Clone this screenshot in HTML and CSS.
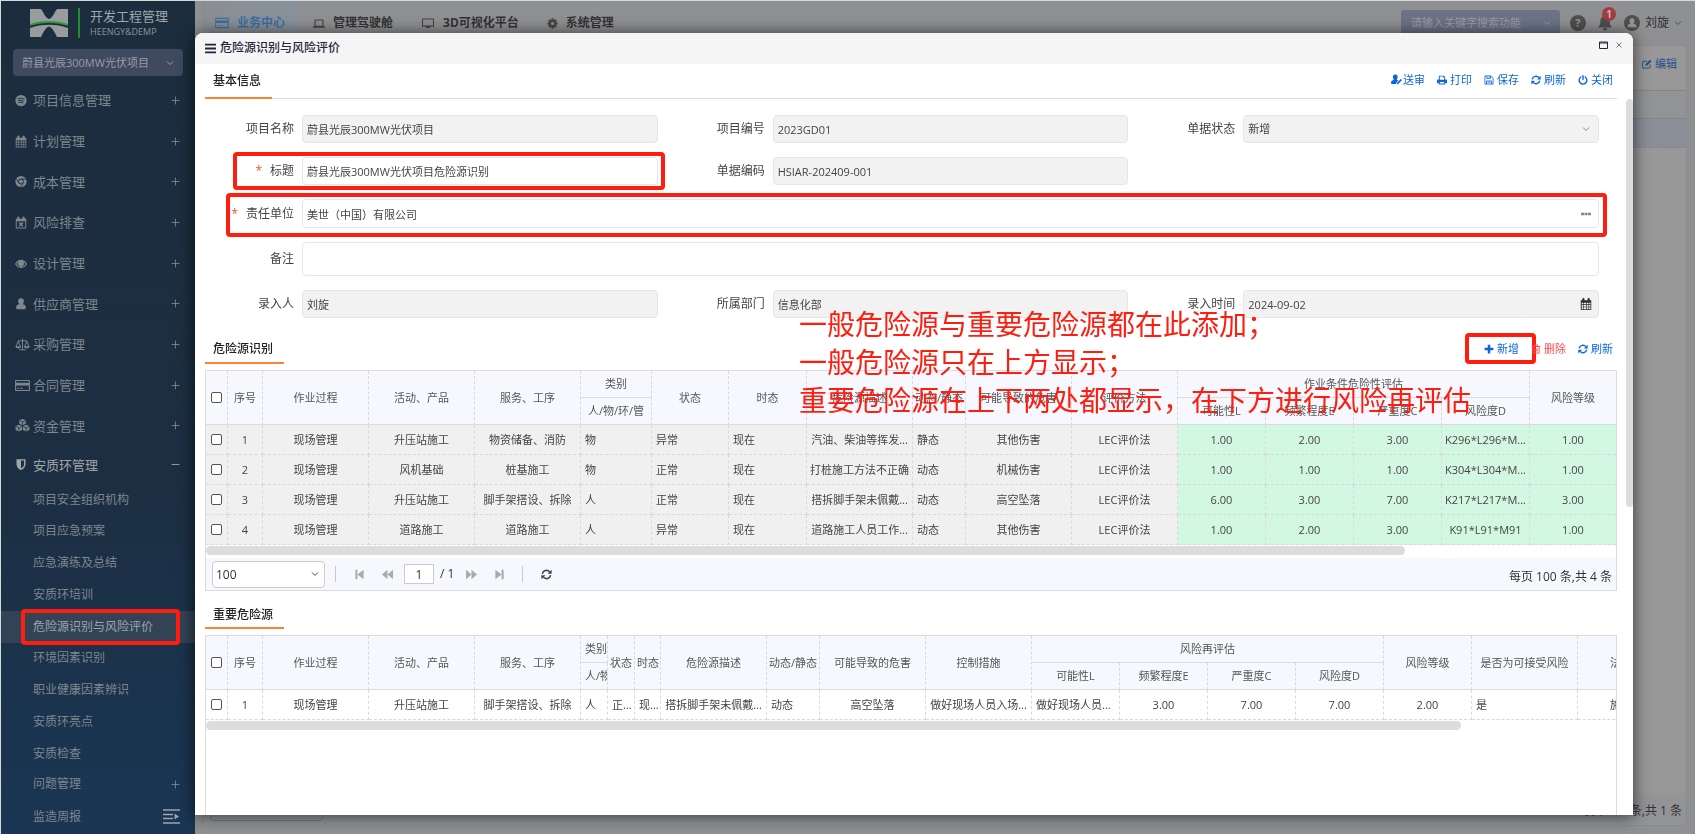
FILE: index.html
```html
<!DOCTYPE html>
<html lang="zh-CN">
<head>
<meta charset="utf-8">
<meta name="viewport" content="width=device-width, initial-scale=1">
<title>开发工程管理</title>
<link rel="stylesheet" href="styles.css">
</head>
<body>
<svg class="sprite" aria-hidden="true">
  <symbol id="plus-thin" viewBox="0 0 16 16"><path d="M8 1v14M1 8h14" fill="none" stroke="currentColor" stroke-width="1.6"/></symbol>
  <symbol id="minus-thin" viewBox="0 0 16 16"><path d="M1 8h14" fill="none" stroke="currentColor" stroke-width="1.6"/></symbol>
  <symbol id="chevron" viewBox="0 0 16 16"><path d="M2 5l6 6 6-6" fill="none" stroke="currentColor" stroke-width="2"/></symbol>
  <symbol id="spotify" viewBox="0 0 16 16"><circle cx="8" cy="8" r="7.5" fill="currentColor"/><path d="M3.5 5.6c3-.9 6.500-.6 9.200.9M4 8.300c2.600-.7 5.500-.4 7.800.8M4.500 10.800c2.200-.6 4.500-.3 6.300.7" fill="none" stroke="#1c2e41" stroke-width="1.300"/></symbol>
  <symbol id="calendar" viewBox="0 0 16 16"><path fill="currentColor" fill-rule="evenodd" d="M1 3h2V1.500a1 1 0 0 1 3 0V3h4V1.500a1 1 0 0 1 3 0V3h2v13H1zm1.200 3.300v2h2.300v-2zm3.200 0v2H8v-2zm3.500 0v2h2.400v-2zm3.300 0v2H14v-2zM2.200 9.200v2.300h2.300V9.200zm3.200 0v2.300H8V9.200zm3.500 0v2.300h2.400V9.200zm3.300 0v2.300H14V9.200zm-10 3.200V15h2.300v-2.600zm3.200 0V15H8v-2.600zm3.500 0V15h2.400v-2.600zm3.300 0V15H14v-2.600z"/></symbol>
  <symbol id="chrome" viewBox="0 0 16 16"><circle cx="8" cy="8" r="7.500" fill="currentColor"/><circle cx="8" cy="8" r="3.300" fill="none" stroke="#1c2e41" stroke-width="1.200"/><path d="M8 4.700h7M5.100 9.600L1.800 4M10.900 9.600L7.500 15.500" stroke="#1c2e41" stroke-width="1.100"/></symbol>
  <symbol id="calendar-x" viewBox="0 0 16 16"><path fill="currentColor" fill-rule="evenodd" d="M1 3h2V1.500a1 1 0 0 1 3 0V3h4V1.500a1 1 0 0 1 3 0V3h2v13H1zm1.300 3.300v8.400h11.400V6.300z"/><path d="M5.500 8l5 5m0-5l-5 5" stroke="currentColor" stroke-width="1.800"/></symbol>
  <symbol id="eye" viewBox="0 0 16 16"><path fill="currentColor" fill-rule="evenodd" d="M0 8.500C2 5 5 3 8 3s6 2 8 5.500C14 12 11 14 8 14S2 12 0 8.500zm2 0c1.500 2.500 3.700 3.800 6 3.800s4.500-1.300 6-3.800c-.8-1.400-1.800-2.400-3-3.100a4 4 0 1 1-6 0c-1.200.7-2.200 1.700-3 3.100z"/></symbol>
  <symbol id="user" viewBox="0 0 16 16"><path fill="currentColor" d="M8 1a3.800 3.800 0 0 1 3.800 4c0 1.800-.8 3.300-1.800 4 3 .3 4.500 1.500 4.500 4.500 0 1-.7 2-2 2h-9c-1.300 0-2-1-2-2C1.500 10.500 3 9.300 6 9 5 8.300 4.200 6.800 4.200 5A3.800 3.800 0 0 1 8 1z"/></symbol>
  <symbol id="scale" viewBox="0 0 18 16"><path fill="none" stroke="currentColor" stroke-width="1.200" d="M9 1v13.500M5 14.500h8M3.500 3.500h11M3.700 4L.8 11h6zM14.300 4l-3 7h6z"/><path fill="currentColor" d="M.5 10.500h6.500c-.3 1.500-1.500 2.300-3.200 2.300S.8 12 .5 10.500zM11 10.500h6.500c-.3 1.500-1.500 2.300-3.200 2.300s-3-.8-3.300-2.300z"/></symbol>
  <symbol id="card" viewBox="0 0 16 14"><path fill="currentColor" fill-rule="evenodd" d="M1 1h14a1 1 0 0 1 1 1v10a1 1 0 0 1-1 1H1a1 1 0 0 1-1-1V2a1 1 0 0 1 1-1zm.2 1.200V4h13.600V2.200zm0 4.800v4.800h13.600V7zM2.500 9.500h2v1h-2zm3 0h3v1h-3z"/></symbol>
  <symbol id="cubes" viewBox="0 0 18 16"><path fill="currentColor" d="M9 0l4 1.600v4.200L9 7.600 5 5.800V1.600zM4.500 7.200l4 1.700v4.600l-4 2-4-2V8.900zM13.500 7.200l4 1.700v4.600l-4 2-4-2V8.900z"/><path fill="none" stroke="#1c2e41" stroke-width=".9" d="M5.500 2.200L9 3.700l3.500-1.500M9 3.700v3.500M1 9.400l3.500 1.500L8 9.400M4.500 10.900V15M10 9.400l3.500 1.500L17 9.400M13.500 10.900V15"/></symbol>
  <symbol id="shield" viewBox="0 0 16 16"><path fill="currentColor" fill-rule="evenodd" d="M2 1h12v7c0 3.500-3 6-6 7.500C5 14 2 11.500 2 8zm6 1.800v10.600c2-1.200 4-3 4-5.400V2.800z"/></symbol>
  <symbol id="laptop" viewBox="0 0 16 16"><path fill="currentColor" fill-rule="evenodd" d="M3 2.500h10a1 1 0 0 1 1 1v8h2v2H0v-2h2v-8a1 1 0 0 1 1-1zm.5 1.500v7h9V4z"/></symbol>
  <symbol id="monitor" viewBox="0 0 16 16"><path fill="currentColor" fill-rule="evenodd" d="M1 2h14a1 1 0 0 1 1 1v9a1 1 0 0 1-1 1h-4.500l.5 1.500H5L5.500 13H1a1 1 0 0 1-1-1V3a1 1 0 0 1 1-1zm.4 1.400v8h13.200v-8z"/></symbol>
  <symbol id="gear" viewBox="0 0 16 16"><circle cx="8" cy="8" r="4" fill="none" stroke="currentColor" stroke-width="3.400"/><path stroke="currentColor" stroke-width="3" fill="none" d="M8 .5v3M8 12.500v3M.5 8h3M12.500 8h3M2.700 2.700l2 2M11.300 11.300l2 2M2.700 13.300l2-2M11.300 4.700l2-2"/></symbol>
  <symbol id="bell" viewBox="0 0 16 18"><path fill="currentColor" d="M8 0c.8 0 1.300.5 1.300 1.300C12 2 13.300 4.200 13.300 7c0 3.500.9 5.500 2.700 7H0c1.800-1.500 2.700-3.500 2.700-7C2.700 4.200 4 2 6.700 1.300 6.700.5 7.200 0 8 0zM5.500 15h5a2.500 2.500 0 0 1-5 0z"/></symbol>
  <symbol id="usercircle" viewBox="0 0 16 16"><circle cx="8" cy="8" r="8" fill="currentColor"/><path fill="#959595" d="M8 3.300A2.400 2.400 0 0 1 10.400 6c0 1.200-.5 2-1.100 2.400 2.200.3 3.200 1.400 3.200 3.800h-9c0-2.400 1-3.500 3.200-3.800C6.100 8 5.600 7.200 5.600 6A2.400 2.400 0 0 1 8 3.300z"/></symbol>
  <symbol id="edit" viewBox="0 0 16 16"><path fill="none" stroke="currentColor" stroke-width="1.600" d="M13 9v4.500a1 1 0 0 1-1 1H2a1 1 0 0 1-1-1v-9a1 1 0 0 1 1-1h6"/><path fill="currentColor" d="M12.500 1l2.700 2.700L8.500 10.500l-3.200.6.500-3.300z"/></symbol>
  <symbol id="bars" viewBox="0 0 16 16"><path stroke="currentColor" stroke-width="2.600" d="M0 2.500h16M0 8h16M0 13.500h16"/></symbol>
  <symbol id="send" viewBox="0 0 18 16"><path fill="currentColor" d="M7 0a3.800 3.800 0 0 1 3.800 4c0 2-.7 3.500-1.500 4.300L12 9.700 9 13l-.5 2.500H2c-1.300 0-2-.8-2-2C0 11 1 9.700 4.700 8.300 3.900 7.500 3.200 6 3.200 4A3.800 3.800 0 0 1 7 0zM16 7l2 2-5.700 6-2.600.8.600-2.800z"/></symbol>
  <symbol id="print" viewBox="0 0 16 16"><path fill="currentColor" fill-rule="evenodd" d="M3 1h8l2 2v4h1.500A1.500 1.500 0 0 1 16 8.500V13h-3v2H3v-2H0V8.500A1.500 1.500 0 0 1 1.500 7H3zm1.500 1.500v5h7V4H10V2.500zM4.500 11v2.500h7V11z"/></symbol>
  <symbol id="save" viewBox="0 0 16 16"><path fill="none" stroke="currentColor" stroke-width="1.300" d="M1.500 1.500h10l3 3v10h-13zM4.500 1.500v4h6v-4M4 14.500v-5h8v5M8.500 2.500v2M5.500 11.500h5"/></symbol>
  <symbol id="refresh" viewBox="0 0 16 16"><path fill="none" stroke="currentColor" stroke-width="2.300" d="M2 7a6 6 0 0 1 10.500-2.800M14 9a6 6 0 0 1-10.500 2.800"/><path fill="currentColor" d="M15.500 1v6h-6zM.5 15V9h6z"/></symbol>
  <symbol id="power" viewBox="0 0 16 16"><path fill="none" stroke="currentColor" stroke-width="2.200" stroke-linecap="round" d="M4.500 3.200a6.200 6.200 0 1 0 7 0M8 1.200v6"/></symbol>
  <symbol id="plus" viewBox="0 0 16 16"><path stroke="currentColor" stroke-width="4" d="M8 1v14M1 8h14"/></symbol>
  <symbol id="trash" viewBox="0 0 16 16"><path fill="none" stroke="currentColor" stroke-width="1.500" d="M1 4h14M3 4v10.500h10V4M5.500 4V1.500h5V4M6 7v5M8 7v5M10 7v5"/></symbol>
  <symbol id="first" viewBox="0 0 16 16"><path fill="currentColor" d="M2 1h3v14H2zM14 1v14L5 8z"/></symbol>
  <symbol id="prev" viewBox="0 0 16 16"><path fill="currentColor" d="M8 1v14L0 8zM16 1v14L8 8z"/></symbol>
  <symbol id="next" viewBox="0 0 16 16"><path fill="currentColor" d="M0 1v14l8-7zM8 1v14l8-7z"/></symbol>
  <symbol id="last" viewBox="0 0 16 16"><path fill="currentColor" d="M11 1h3v14h-3zM2 1v14l9-7z"/></symbol>
</svg>

<div class="app">
  <aside class="sidebar">
    <div class="brand">
      <svg class="brand-logo" viewBox="0 0 38 28" aria-hidden="true">
        <path fill="#999c9f" d="M0 0h11c3 4 4.500 9 8 10 3.500-1 5-6 8-10h11v28H27c-2-4-4.500-9.500-8-10.500C15.500 18.500 13 24 11 28H0z"/>
        <path d="M0 17.500c11-4.500 27-4.500 38 0" fill="none" stroke="#1c2e41" stroke-width="3"/>
        <path d="M0 16c11-4 27-4 38 0" fill="none" stroke="#2f9a35" stroke-width="1.800"/>
      </svg>
      <div class="brand-text"><b>开发工程管理</b><span>HEENGY&amp;DEMP</span></div>
    </div>
    <button class="project" type="button"><span>蔚县光辰300MW光伏项目</span><svg class="i8"><use href="#chevron"/></svg></button>
    <nav class="menu">
      <a class="top" href="#"><svg class="mi"><use href="#spotify"/></svg><span>项目信息管理</span><svg class="i9"><use href="#plus-thin"/></svg></a>
      <a class="top" href="#"><svg class="mi"><use href="#calendar"/></svg><span>计划管理</span><svg class="i9"><use href="#plus-thin"/></svg></a>
      <a class="top" href="#"><svg class="mi"><use href="#chrome"/></svg><span>成本管理</span><svg class="i9"><use href="#plus-thin"/></svg></a>
      <a class="top" href="#"><svg class="mi"><use href="#calendar-x"/></svg><span>风险排查</span><svg class="i9"><use href="#plus-thin"/></svg></a>
      <a class="top" href="#"><svg class="mi"><use href="#eye"/></svg><span>设计管理</span><svg class="i9"><use href="#plus-thin"/></svg></a>
      <a class="top" href="#"><svg class="mi"><use href="#user"/></svg><span>供应商管理</span><svg class="i9"><use href="#plus-thin"/></svg></a>
      <a class="top" href="#"><svg class="mi wide"><use href="#scale"/></svg><span>采购管理</span><svg class="i9"><use href="#plus-thin"/></svg></a>
      <a class="top" href="#"><svg class="mi wide"><use href="#card"/></svg><span>合同管理</span><svg class="i9"><use href="#plus-thin"/></svg></a>
      <a class="top" href="#"><svg class="mi wide"><use href="#cubes"/></svg><span>资金管理</span><svg class="i9"><use href="#plus-thin"/></svg></a>
      <a class="top open" href="#"><svg class="mi"><use href="#shield"/></svg><span>安质环管理</span><svg class="i9"><use href="#minus-thin"/></svg></a>
      <a class="sub" href="#"><span>项目安全组织机构</span></a>
      <a class="sub" href="#"><span>项目应急预案</span></a>
      <a class="sub" href="#"><span>应急演练及总结</span></a>
      <a class="sub" href="#"><span>安质环培训</span></a>
      <a class="sub active" href="#"><span>危险源识别与风险评价</span><i class="mark mark-menu"></i></a>
      <a class="sub" href="#"><span>环境因素识别</span></a>
      <a class="sub" href="#"><span>职业健康因素辨识</span></a>
      <a class="sub" href="#"><span>安质环亮点</span></a>
      <a class="sub" href="#"><span>安质检查</span></a>
      <a class="sub" href="#"><span>问题管理</span><svg class="i9"><use href="#plus-thin"/></svg></a>
      <a class="sub" href="#"><span>监造周报</span><svg class="fold" viewBox="0 0 17 15"><path d="M0 1h17M0 5.500h10M0 9.500h10M0 14h17" stroke="currentColor" stroke-width="1.500"/><path d="M11.500 4.500v6l4.500-3z" fill="currentColor"/></svg></a>
    </nav>
  </aside>

  <div class="main">
    <header class="topbar">
      <nav class="tabs">
        <a class="tab on" href="#"><svg class="i14"><use href="#card"/></svg>业务中心</a>
        <a class="tab" href="#"><svg class="i12"><use href="#laptop"/></svg>管理驾驶舱</a>
        <a class="tab" href="#"><svg class="i14"><use href="#monitor"/></svg>3D可视化平台</a>
        <a class="tab" href="#"><svg class="i11"><use href="#gear"/></svg>系统管理</a>
      </nav>
      <div class="tools">
        <button class="search" type="button"><span>请输入关键字搜索功能</span><svg class="i8"><use href="#chevron"/></svg></button>
        <span class="help">?</span>
        <span class="bell"><svg><use href="#bell"/></svg><b>1</b></span>
        <button class="account" type="button"><svg class="i16"><use href="#usercircle"/></svg>刘旋<svg class="i8"><use href="#chevron"/></svg></button>
      </div>
    </header>
    <section class="page">
      <div class="page-head"><a href="#"><svg class="i10"><use href="#edit"/></svg>编辑</a></div>
      <div class="page-row"></div>
      <div class="page-row sel"></div>
      <div class="page-fill"></div>
      <div class="page-foot"><span class="page-size">100</span><span>每页 100 条,共 1 条</span></div>
    </section>
  </div>
</div>

<div class="modal" role="dialog" aria-labelledby="dlg-title">
  <header class="modal-head">
    <svg class="i11"><use href="#bars"/></svg><h1 id="dlg-title">危险源识别与风险评价</h1>
    <button type="button" class="win" aria-label="最大化"><svg class="i9" viewBox="0 0 9 8"><path d="M.5.500h8v6.500h-8zM.5 1.500h8" fill="none" stroke="currentColor"/></svg></button>
    <button type="button" class="win close" aria-label="关闭窗口"><svg class="i6" viewBox="0 0 6 6"><path d="M.5.500l5 5m0-5l-5 5" stroke="currentColor"/></svg></button>
  </header>
  <div class="modal-body">
    <div class="section-head first">
      <h2>基本信息</h2>
      <div class="acts">
        <button type="button" class="tight"><svg class="i11"><use href="#send"/></svg>送审</button>
        <button type="button"><svg class="i10"><use href="#print"/></svg>打印</button>
        <button type="button"><svg class="i10"><use href="#save"/></svg>保存</button>
        <button type="button"><svg class="i10"><use href="#refresh"/></svg>刷新</button>
        <button type="button"><svg class="i10"><use href="#power"/></svg>关闭</button>
      </div>
    </div>
    <form class="form">
      <div class="field"><label for="f1">项目名称</label><input id="f1" value="蔚县光辰300MW光伏项目" readonly></div>
      <div class="field"><label for="f2">项目编号</label><input id="f2" value="2023GD01" readonly></div>
      <div class="field pick"><label for="f3">单据状态</label><select id="f3" disabled><option>新增</option></select><svg class="i8"><use href="#chevron"/></svg></div>
      <div class="field"><label for="f4"><i>*</i>标题</label><input id="f4" value="蔚县光辰300MW光伏项目危险源识别"><i class="mark mark-title"></i></div>
      <div class="field two"><label for="f5">单据编码</label><input id="f5" value="HSIAR-202409-001" readonly></div>
      <div class="field full pick"><label for="f6"><i>*</i>责任单位</label><input id="f6" class="mid" value="美世（中国）有限公司"><svg class="dots" viewBox="0 0 10 3"><path d="M0 0h3v3H0zM3.500 0h3v3h-3zM7 0h3v3H7z" fill="currentColor"/></svg><i class="mark mark-unit"></i></div>
      <div class="field full"><label for="f7">备注</label><input id="f7" class="tall"></div>
      <div class="field"><label for="f8">录入人</label><input id="f8" value="刘旋" readonly></div>
      <div class="field"><label for="f9">所属部门</label><input id="f9" value="信息化部" readonly></div>
      <div class="field pick"><label for="f10">录入时间</label><input id="f10" value="2024-09-02" readonly><svg class="i12 date"><use href="#calendar"/></svg></div>
    </form>

    <div class="section-head">
      <h2>危险源识别</h2>
      <div class="acts">
        <button type="button" class="add"><svg class="i10"><use href="#plus"/></svg>新增<i class="mark mark-add"></i></button>
        <button type="button" class="del"><svg class="i10"><use href="#trash"/></svg>删除</button>
        <button type="button"><svg class="i10"><use href="#refresh"/></svg>刷新</button>
      </div>
    </div>
    <div class="grid">
      <table>
        <colgroup><col class="w22"><col class="w35"><col class="w106"><col class="w106"><col class="w106"><col class="w71"><col class="w77"><col class="w78"><col class="w106"><col class="w53"><col class="w106"><col class="w106"><col class="w88"><col class="w88"><col class="w88"><col class="w88"><col></colgroup>
        <thead>
          <tr><th rowspan="2"><input type="checkbox" aria-label="全选"></th><th rowspan="2">序号</th><th rowspan="2">作业过程</th><th rowspan="2">活动、产品</th><th rowspan="2">服务、工序</th><th class="g">类别</th><th rowspan="2">状态</th><th rowspan="2">时态</th><th rowspan="2">危险源描述</th><th rowspan="2">动态/静态</th><th rowspan="2">可能导致的危害</th><th rowspan="2">评价方法</th><th class="g" colspan="4">作业条件危险性评估</th><th rowspan="2">风险等级</th></tr>
          <tr><th>人/物/环/管</th><th>可能性L</th><th>频繁程度E</th><th>严重度C</th><th>风险度D</th></tr>
        </thead>
        <tbody class="locked">
          <tr><td><input type="checkbox" aria-label="选择 1"></td><td>1</td><td>现场管理</td><td>升压站施工</td><td>物资储备、消防</td><td class="l">物</td><td class="l">异常</td><td class="l">现在</td><td>汽油、柴油等挥发...</td><td class="l">静态</td><td>其他伤害</td><td>LEC评价法</td><td class="ok">1.00</td><td class="ok">2.00</td><td class="ok">3.00</td><td class="ok">K296*L296*M...</td><td class="ok">1.00</td></tr>
          <tr><td><input type="checkbox" aria-label="选择 2"></td><td>2</td><td>现场管理</td><td>风机基础</td><td>桩基施工</td><td class="l">物</td><td class="l">正常</td><td class="l">现在</td><td>打桩施工方法不正确</td><td class="l">动态</td><td>机械伤害</td><td>LEC评价法</td><td class="ok">1.00</td><td class="ok">1.00</td><td class="ok">1.00</td><td class="ok">K304*L304*M...</td><td class="ok">1.00</td></tr>
          <tr><td><input type="checkbox" aria-label="选择 3"></td><td>3</td><td>现场管理</td><td>升压站施工</td><td>脚手架搭设、拆除</td><td class="l">人</td><td class="l">正常</td><td class="l">现在</td><td>搭拆脚手架未佩戴...</td><td class="l">动态</td><td>高空坠落</td><td>LEC评价法</td><td class="ok">6.00</td><td class="ok">3.00</td><td class="ok">7.00</td><td class="ok">K217*L217*M...</td><td class="ok">3.00</td></tr>
          <tr><td><input type="checkbox" aria-label="选择 4"></td><td>4</td><td>现场管理</td><td>道路施工</td><td>道路施工</td><td class="l">人</td><td class="l">异常</td><td class="l">现在</td><td>道路施工人员工作...</td><td class="l">动态</td><td>其他伤害</td><td>LEC评价法</td><td class="ok">1.00</td><td class="ok">2.00</td><td class="ok">3.00</td><td class="ok">K91*L91*M91</td><td class="ok">1.00</td></tr>
        </tbody>
      </table>
      <div class="hbar"><div class="thumb t1"></div></div>
      <div class="pager">
        <span class="size"><select aria-label="每页条数"><option>100</option></select><svg class="i8"><use href="#chevron"/></svg></span>
        <span class="sep"></span>
        <button type="button" aria-label="首页"><svg class="i11"><use href="#first"/></svg></button>
        <button type="button" aria-label="上一页"><svg class="i11"><use href="#prev"/></svg></button>
        <span class="pg"><input value="1" aria-label="页码">/ 1</span>
        <button type="button" aria-label="下一页"><svg class="i11"><use href="#next"/></svg></button>
        <button type="button" aria-label="末页"><svg class="i11"><use href="#last"/></svg></button>
        <span class="sep"></span>
        <button type="button" class="dark" aria-label="刷新列表"><svg class="i11"><use href="#refresh"/></svg></button>
        <span class="total">每页 100 条,共 4 条</span>
      </div>
    </div>

    <div class="section-head second"><h2>重要危险源</h2></div>
    <div class="grid grow">
      <table class="over">
        <colgroup><col class="w22"><col class="w35"><col class="w106"><col class="w106"><col class="w106"><col class="w27"><col class="w27"><col class="w26"><col class="w106"><col class="w53"><col class="w106"><col class="w106"><col class="w88"><col class="w88"><col class="w88"><col class="w88"><col class="w88"><col class="w106"><col class="w106"></colgroup>
        <thead>
          <tr><th rowspan="2"><input type="checkbox" aria-label="全选"></th><th rowspan="2">序号</th><th rowspan="2">作业过程</th><th rowspan="2">活动、产品</th><th rowspan="2">服务、工序</th><th class="g l">类别</th><th rowspan="2">状态</th><th rowspan="2">时态</th><th rowspan="2">危险源描述</th><th rowspan="2">动态/静态</th><th rowspan="2">可能导致的危害</th><th rowspan="2">控制措施</th><th class="g" colspan="4">风险再评估</th><th rowspan="2">风险等级</th><th rowspan="2">是否为可接受风险</th><th rowspan="2" class="cut">法</th></tr>
          <tr><th class="l">人/物</th><th>可能性L</th><th>频繁程度E</th><th>严重度C</th><th>风险度D</th></tr>
        </thead>
        <tbody>
          <tr><td><input type="checkbox" aria-label="选择 1"></td><td>1</td><td>现场管理</td><td>升压站施工</td><td>脚手架搭设、拆除</td><td class="l">人</td><td class="l">正...</td><td class="l">现...</td><td>搭拆脚手架未佩戴...</td><td class="l">动态</td><td>高空坠落</td><td>做好现场人员入场...</td><td class="l">做好现场人员...</td><td>3.00</td><td>7.00</td><td>7.00</td><td>2.00</td><td class="l">是</td><td class="cut">施</td></tr>
        </tbody>
      </table>
      <div class="hbar"><div class="thumb t2"></div></div>
    </div>
  </div>
  <div class="vbar"></div>
  <p class="note">一般危险源与重要危险源都在此添加；<br>一般危险源只在上方显示；<br>重要危险源在上下两处都显示，在下方进行风险再评估</p>
</div>
</body>
</html>
```
FILE: styles.css
```css
* { box-sizing: border-box; }

html, body { height: 100%; }

body {
  margin: 0;
  overflow: hidden;
  font: 11px/16px "Open Sans", "Noto Sans CJK SC", sans-serif;
  color: #444;
  background: #8f9092;
}

button, input, select { font: inherit; color: inherit; margin: 0; }
button { padding: 0; border: 0; background: none; white-space: nowrap; }
a { color: inherit; text-decoration: none; }
svg { flex: none; }
h1, h2, p { margin: 0; }

.sprite { display: none; }
.i6 { width: 6px; height: 6px; }
.i8 { width: 8px; height: 8px; }
.i9 { width: 9px; height: 9px; }
.i10 { width: 10px; height: 10px; }
.i11 { width: 11px; height: 11px; }
.i12 { width: 12px; height: 13px; }
.i14 { width: 14px; height: 12px; }
.i16 { width: 16px; height: 16px; }

.app {
  display: flex;
  height: 100%;
  border-top: 1px solid #d3dad8;
  border-left: 1px solid #d3dad8;
}

/* Sidebar */
.sidebar {
  display: flex;
  flex-direction: column;
  flex: none;
  width: 194px;
  color: #7e868e;
  background: linear-gradient(#1c2d3e, #1c2e41 55%, #1a3654);
}

.brand {
  display: flex;
  align-items: center;
  gap: 10px;
  padding: 7px 0 0 29px;
}

.brand-logo { width: 38px; height: 28px; }

.brand-text {
  display: flex;
  flex-direction: column;
  padding-left: 10px;
  border-left: 2px solid #228c2b;
  color: #a2a6aa;
}

.brand-text b { font-size: 13px; line-height: 17px; font-weight: 400; }
.brand-text span { font-size: 9px; line-height: 13px; color: #8d9399; }

.project {
  display: flex;
  align-items: center;
  justify-content: space-between;
  height: 27px;
  margin: 11px 12px 4px;
  padding: 0 9px;
  border-radius: 4px;
  color: #9a9da6;
  background: #3f495f;
}

.menu {
  flex: 1;
  display: grid;
  grid-template-rows: repeat(9, 41fr) 38fr repeat(9, 32fr) 30fr 35fr;
}

.menu a {
  position: relative;
  display: flex;
  align-items: center;
  padding: 0 15px 0 14px;
}

.menu span { flex: 1; white-space: nowrap; }
.top { font-size: 13px; }
.mi { width: 12px; height: 13px; margin-right: 6px; }
.mi.wide { width: 15px; margin-right: 3px; }
.menu .open { color: #a0a4a8; }
.menu .sub { padding-left: 32px; font-size: 12px; }
.menu .active { color: #9ba3aa; background: #324356; }
.fold { width: 17px; height: 15px; color: #a0a4a8; }

/* Page behind the dialog */
.main { flex: 1; display: flex; flex-direction: column; min-width: 0; }

.topbar {
  display: flex;
  justify-content: space-between;
  height: 44px;
  padding: 0 13px 0 6px;
  color: #333;
}

.tabs { display: flex; }

.tab {
  display: flex;
  align-items: center;
  gap: 8px;
  padding: 0 14px;
  font-size: 12px;
  font-weight: 700;
}

.tab svg { color: #444; }
.tab.on, .tab.on svg { color: #3c6f9f; }
.tab.on { background: linear-gradient(90deg, #8b8e91, #87929d); }

.tools { display: flex; align-items: center; gap: 12px; }

.search {
  display: flex;
  align-items: center;
  justify-content: space-between;
  width: 159px;
  height: 27px;
  margin-right: -2px;
  padding: 0 9px 0 10px;
  border-radius: 3px;
  color: #999ca4;
  background: #6c7387;
}

.help {
  width: 16px;
  height: 16px;
  border-radius: 8px;
  text-align: center;
  font-weight: 700;
  color: #939393;
  background: #4f4f4f;
}

.bell { position: relative; display: flex; color: #4f4f4f; }
.bell svg { width: 14px; height: 16px; }

.bell b {
  position: absolute;
  left: 4px;
  top: -8px;
  width: 14px;
  height: 14px;
  border-radius: 7px;
  font-size: 10px;
  line-height: 14px;
  text-align: center;
  color: #bbb;
  background: #a23c40;
}

.account { display: flex; align-items: center; gap: 5px; font-size: 12px; color: #2e2e2e; }
.account svg { color: #4f4f4f; }

.page {
  flex: 1;
  display: flex;
  flex-direction: column;
  margin: 0 8px 8px;
  border: 1px solid #8b8b8b;
  border-radius: 3px;
  background: #989898;
}

.page-head { display: flex; justify-content: flex-end; align-items: center; height: 44px; padding: 0 9px 8px; color: #27508a; }
.page-head a { display: flex; align-items: center; gap: 3px; }
.page-row { height: 28px; border-top: 1px solid #858585; background: #929395; }
.page-row.sel { height: 30px; border-bottom: 1px dashed #868686; background: #8a8f97; }
.page-fill { flex: 1; }

.page-foot {
  display: flex;
  justify-content: space-between;
  align-items: center;
  height: 32px;
  padding: 3px 4px 0 6px;
  font-size: 12px;
  color: #333;
  background: #939496;
}

.page-size { width: 113px; height: 26px; margin-bottom: 6px; padding: 4px; border: 1px solid #7b7b7b; border-radius: 4px; }

/* Dialog */
.modal {
  position: fixed;
  inset: 33px 62px 19px 195px;
  display: flex;
  flex-direction: column;
  border-radius: 8px 8px 0 0;
  background: #fff;
  box-shadow: 0 1px 16px 1px rgba(0, 0, 0, .6);
}

.modal-head {
  display: flex;
  align-items: center;
  gap: 4px;
  height: 31px;
  padding: 0 11px 1px 10px;
  border-radius: 8px 8px 0 0;
  color: #26243c;
  background: #f5f5f5;
}

.modal-head h1 { flex: 1; font-size: 12px; line-height: 16px; font-weight: 500; }
.win { display: flex; padding-bottom: 6px; }
.close { margin-left: 4px; color: #777; }

.modal-body {
  flex: 1;
  display: flex;
  flex-direction: column;
  min-height: 0;
  padding: 0 16px 0 10px;
  overflow: hidden;
}

.section-head { display: flex; justify-content: space-between; height: 30px; margin-top: 16px; }

.section-head h2 {
  padding: 7px 11px 0 8px;
  border-bottom: 2px solid #fb8432;
  font-size: 12px;
  line-height: 16px;
  font-weight: 500;
  color: #222;
}

.section-head.first { height: 35px; margin: 0; border-bottom: 1px solid #dcdcdc; }
.section-head.first h2 { padding-top: 9px; margin-bottom: -1px; }
.section-head.second { height: 29px; margin-top: 9px; }

.acts { display: flex; align-items: center; gap: 12px; padding-right: 4px; color: #0d66d8; }
.first .acts { padding-bottom: 3px; }
.acts button { position: relative; display: flex; align-items: center; gap: 3px; }
.acts .tight { gap: 1px; }
.acts .del { color: #fb4d4d; }

.form {
  display: grid;
  grid-template-columns: repeat(3, 1fr);
  row-gap: 14px;
  margin-top: 16px;
}

.field {
  position: relative;
  display: grid;
  grid-template-columns: 89px 1fr;
  column-gap: 8px;
  align-items: center;
  padding-right: 18px;
}

.field label { text-align: right; font-size: 12px; white-space: nowrap; }
.field label i { margin-right: 8px; font-style: normal; color: #f0541e; }
.full { grid-column: 1 / -1; }
.two { grid-column: 2 / -1; width: 50%; }

.field input, .field select {
  width: 100%;
  min-width: 0;
  height: 28px;
  padding: 0 4px;
  border: 1px solid #e6e6e6;
  border-radius: 4px;
  background: #fff;
  outline: 0;
  opacity: 1;
  appearance: none;
}

.field input[readonly], .field select { background: #f2f2f2; }
.field .mid { height: 29px; }
.field .tall { height: 34px; }
.pick svg { position: absolute; right: 27px; top: 50%; translate: 0 -50%; color: #888; }
.pick .dots { width: 10px; height: 3px; right: 26px; }
.pick .date { right: 25px; color: #33293a; }

/* Data grids */
.grid { margin-top: 6px; border: 1px solid #dcdcdc; overflow: hidden; }
.grid.grow { flex: 1; border-bottom: 0; }

table { width: 100%; table-layout: fixed; border-collapse: separate; border-spacing: 0; }
.over { width: 1478px; }

.w22 { width: 22px; }
.w26 { width: 26px; }
.w27 { width: 27px; }
.w35 { width: 35px; }
.w53 { width: 53px; }
.w71 { width: 71px; }
.w77 { width: 77px; }
.w78 { width: 78px; }
.w88 { width: 88px; }
.w106 { width: 106px; }

th, td {
  height: 30px;
  padding: 0 2px;
  border-right: 1px dashed #d9d9d9;
  border-bottom: 1px dashed #d9d9d9;
  text-align: center;
  font-weight: 400;
  white-space: nowrap;
  overflow: hidden;
}

th { height: 27px; border-bottom: 1px solid #dcdcdc; color: #555; background: #f6f8fd; }
.locked td { background: #f0f0f0; }
.locked .ok { background: #d3f8e1; }
th.l, td.l { text-align: left; padding-left: 4px; }
th.cut, td.cut { text-align: left; padding-left: 32px; }
.grid:not(.grow) tr:first-child th:last-child, td:last-child { border-right: 0; }

input[type="checkbox"] {
  appearance: none;
  display: block;
  width: 11px;
  height: 11px;
  margin: 0 auto;
  border: 1px solid #555;
  border-radius: 2px;
  background: #fff;
}

.hbar { padding: 1px 0 3px; background: #fff; }
.thumb { height: 9px; border-radius: 5px; background: #dcdcdc; }
.t1 { width: 85%; }
.t2 { width: 89%; }

.pager {
  display: flex;
  align-items: center;
  gap: 18px;
  height: 32px;
  padding: 0 4px 0 6px;
  font-size: 12px;
  color: #333;
  background: #f6f8fd;
}

.size { position: relative; display: flex; width: 113px; margin-right: -8px; }
.size svg { position: absolute; right: 6px; top: 9px; color: #444; }

.size select {
  width: 100%;
  height: 27px;
  padding: 2px 3px 0;
  border: 1px solid #ccc;
  border-radius: 4px;
  background: #fff;
  appearance: none;
}

.pager button { display: flex; width: 10px; color: #aaa; }
.pager .dark { color: #444; }
.sep { width: 1px; height: 16px; background: #c8c8c8; }
.pg { display: flex; align-items: center; gap: 6px; margin: 0 -6px; }
.pg input { width: 30px; height: 20px; padding: 0; border: 1px solid #ccc; text-align: center; background: #fff; }
.total { margin-left: auto; padding-top: 6px; }

.vbar {
  position: absolute;
  top: 66px;
  right: 0;
  width: 7px;
  height: 408px;
  border-radius: 4px;
  background: #ddd;
}

/* Callouts drawn over the screen */
.mark { position: absolute; border: 4px solid #ff1d10; border-radius: 4px; pointer-events: none; }
.mark-title { inset: -5px 11px -5px 28px; }
.mark-unit { inset: -6px 10px -9px 21px; }
.mark-add { inset: -8px -17px -7px -19px; }
.mark-menu { inset: -2px 15px -2px 20px; }

.note {
  position: absolute;
  left: 604px;
  top: 272px;
  font-size: 28px;
  line-height: 38px;
  white-space: nowrap;
  color: #ff1d10;
}
```
